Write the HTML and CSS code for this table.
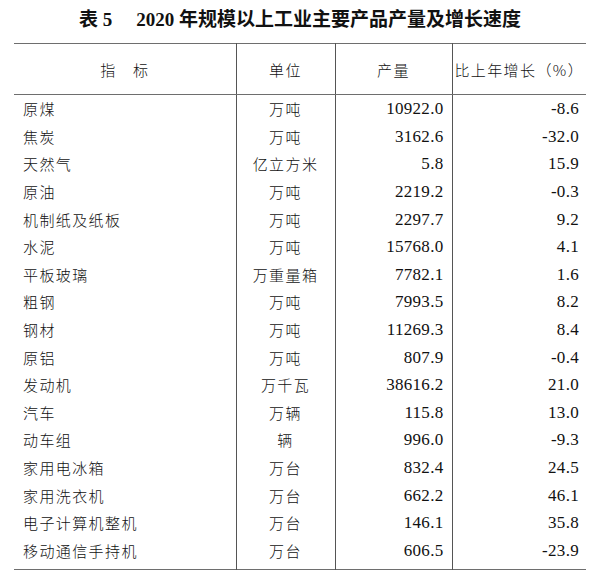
FILE: index.html
```html
<!DOCTYPE html>
<html lang="zh-CN">
<head>
<meta charset="utf-8">
<title>表5 2020年规模以上工业主要产品产量及增长速度</title>
<link rel="stylesheet" href="styles.css">
</head>
<body>
<h1 class="title"><span class="t-no">表 5</span><span class="t-text">2020 年规模以上工业主要产品产量及增长速度</span></h1>
<table class="data">
  <colgroup>
    <col class="c1"><col class="c2"><col class="c3"><col class="c4">
  </colgroup>
  <thead>
    <tr>
      <th class="name-h">指　标</th>
      <th>单位</th>
      <th>产量</th>
      <th>比上年增长（%）</th>
    </tr>
  </thead>
  <tbody>
    <tr><td class="name">原煤</td><td class="unit">万吨</td><td class="num">10922.0</td><td class="num pct">-8.6</td></tr>
    <tr><td class="name">焦炭</td><td class="unit">万吨</td><td class="num">3162.6</td><td class="num pct">-32.0</td></tr>
    <tr><td class="name">天然气</td><td class="unit">亿立方米</td><td class="num">5.8</td><td class="num pct">15.9</td></tr>
    <tr><td class="name">原油</td><td class="unit">万吨</td><td class="num">2219.2</td><td class="num pct">-0.3</td></tr>
    <tr><td class="name">机制纸及纸板</td><td class="unit">万吨</td><td class="num">2297.7</td><td class="num pct">9.2</td></tr>
    <tr><td class="name">水泥</td><td class="unit">万吨</td><td class="num">15768.0</td><td class="num pct">4.1</td></tr>
    <tr><td class="name">平板玻璃</td><td class="unit">万重量箱</td><td class="num">7782.1</td><td class="num pct">1.6</td></tr>
    <tr><td class="name">粗钢</td><td class="unit">万吨</td><td class="num">7993.5</td><td class="num pct">8.2</td></tr>
    <tr><td class="name">钢材</td><td class="unit">万吨</td><td class="num">11269.3</td><td class="num pct">8.4</td></tr>
    <tr><td class="name">原铝</td><td class="unit">万吨</td><td class="num">807.9</td><td class="num pct">-0.4</td></tr>
    <tr><td class="name">发动机</td><td class="unit">万千瓦</td><td class="num">38616.2</td><td class="num pct">21.0</td></tr>
    <tr><td class="name">汽车</td><td class="unit">万辆</td><td class="num">115.8</td><td class="num pct">13.0</td></tr>
    <tr><td class="name">动车组</td><td class="unit">辆</td><td class="num">996.0</td><td class="num pct">-9.3</td></tr>
    <tr><td class="name">家用电冰箱</td><td class="unit">万台</td><td class="num">832.4</td><td class="num pct">24.5</td></tr>
    <tr><td class="name">家用洗衣机</td><td class="unit">万台</td><td class="num">662.2</td><td class="num pct">46.1</td></tr>
    <tr><td class="name">电子计算机整机</td><td class="unit">万台</td><td class="num">146.1</td><td class="num pct">35.8</td></tr>
    <tr><td class="name">移动通信手持机</td><td class="unit">万台</td><td class="num">606.5</td><td class="num pct">-23.9</td></tr>
  </tbody>
</table>
</body>
</html>
```

FILE: styles.css
```css
html, body {
  margin: 0;
  padding: 0;
  background: #ffffff;
}

body {
  color: #111111;
  font-family: "Noto Sans CJK SC", "Noto Sans", sans-serif;
}

.title {
  margin: 0 0 5px 0;
  height: 38px;
  line-height: 40px;
  text-align: center;
  font-family: "Liberation Serif", "Noto Sans CJK SC", serif;
  font-size: 19px;
  font-weight: 700;
  color: #111111;
}

.t-no {
  margin-right: 24px;
}

.data {
  margin-left: 14px;
  width: 572px;
  border-collapse: collapse;
  table-layout: fixed;
  border-top: 1.5px solid #6e6e6e;
  border-bottom: 1.5px solid #6e6e6e;
}

.c1 { width: 222px; }
.c2 { width: 99px; }
.c3 { width: 117px; }
.c4 { width: 134px; }

.data th,
.data td {
  padding: 0;
  border-left: 1px solid #555555;
  border-right: 1px solid #555555;
  vertical-align: middle;
  white-space: nowrap;
}

.data th:first-child,
.data td:first-child {
  border-left: none;
}

.data th:last-child,
.data td:last-child {
  border-right: none;
}

.data th {
  height: 49px;
  padding-top: 1px;
  font-size: 15px;
  font-weight: 300;
  letter-spacing: 1.4px;
  text-align: center;
  border-bottom: 1.5px solid #6e6e6e;
}

.data td {
  height: 24.6px;
  padding-bottom: 3px;
  line-height: 20px;
  font-size: 15px;
  font-weight: 300;
}

.data tbody tr:first-child td {
  padding-top: 2px;
}

.data tbody tr:last-child td {
  padding-bottom: 6px;
}

.data td.name {
  padding-left: 9px;
  letter-spacing: 1.4px;
  text-align: left;
}

.data td.unit {
  text-align: center;
  letter-spacing: 1.4px;
}

.data td.num {
  text-align: right;
  padding-right: 8px;
  font-family: "Liberation Serif", serif;
  font-size: 17px;
  letter-spacing: 0.3px;
}

.data td.pct {
  padding-right: 7px;
}
```
